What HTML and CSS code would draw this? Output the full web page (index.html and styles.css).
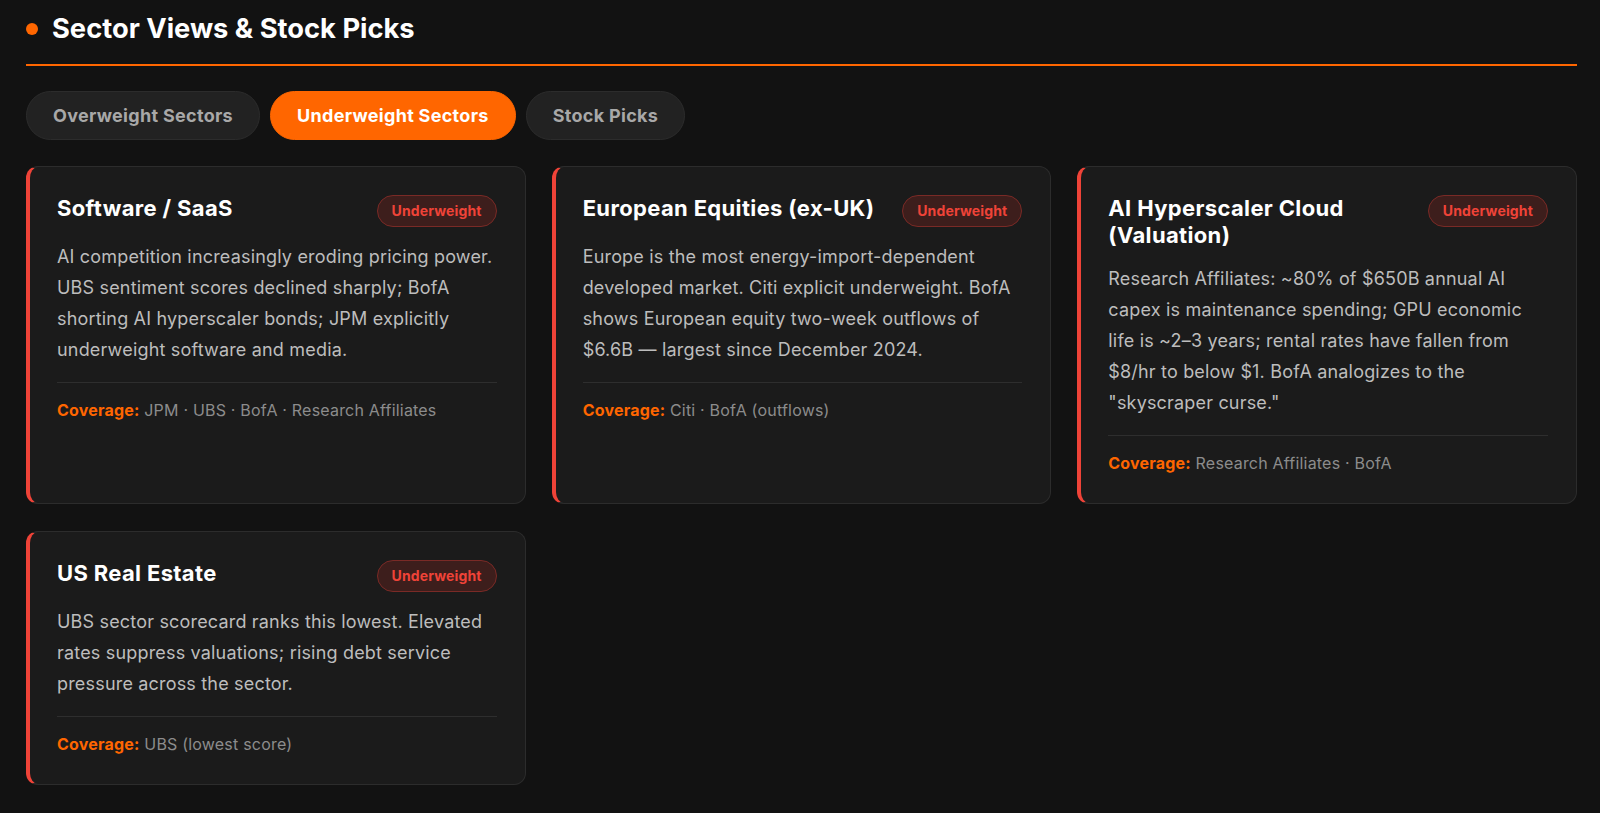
FILE: index.html
```html
<!DOCTYPE html>
<html lang="en">
<head>
    <meta charset="UTF-8">
    <meta name="viewport" content="width=device-width, initial-scale=1.0">
    <title>Sector Views &amp; Stock Picks</title>
    <link rel="stylesheet" href="styles.css">
</head>
<body>
    <div class="section">
        <h2 class="section-title"><span class="dot"></span>Sector Views &amp; Stock Picks</h2>

        <div class="tabs">
            <button class="tab">Overweight Sectors</button>
            <button class="tab active">Underweight Sectors</button>
            <button class="tab">Stock Picks</button>
        </div>

        <div class="cards">
            <div class="card">
                <div class="card-head">
                    <h3>Software / SaaS</h3>
                    <span class="badge">Underweight</span>
                </div>
                <p class="desc">AI competition increasingly eroding pricing power. UBS sentiment scores declined sharply; BofA shorting AI hyperscaler bonds; JPM explicitly underweight software and media.</p>
                <div class="coverage"><strong>Coverage:</strong> JPM · UBS · BofA · Research Affiliates</div>
            </div>

            <div class="card">
                <div class="card-head">
                    <h3>European Equities (ex-UK)</h3>
                    <span class="badge">Underweight</span>
                </div>
                <p class="desc">Europe is the most energy-import-dependent developed market. Citi explicit underweight. BofA shows European equity two-week outflows of $6.6B — largest since December 2024.</p>
                <div class="coverage"><strong>Coverage:</strong> Citi · BofA (outflows)</div>
            </div>

            <div class="card">
                <div class="card-head">
                    <h3>AI Hyperscaler Cloud (Valuation)</h3>
                    <span class="badge">Underweight</span>
                </div>
                <p class="desc">Research Affiliates: ~80% of $650B annual AI capex is maintenance spending; GPU economic life is ~2–3 years; rental rates have fallen from $8/hr to below $1. BofA analogizes to the "skyscraper curse."</p>
                <div class="coverage"><strong>Coverage:</strong> Research Affiliates · BofA</div>
            </div>

            <div class="card">
                <div class="card-head">
                    <h3>US Real Estate</h3>
                    <span class="badge">Underweight</span>
                </div>
                <p class="desc">UBS sector scorecard ranks this lowest. Elevated rates suppress valuations; rising debt service pressure across the sector.</p>
                <div class="coverage"><strong>Coverage:</strong> UBS (lowest score)</div>
            </div>
        </div>
    </div>
</body>
</html>
```

FILE: styles.css
```css
body { margin: 0; background: #121212; color: #fff; font-family: Inter, "Open Sans", sans-serif; }
.section { padding: 12px 23px 40px 26px; }
.section-title { display: flex; align-items: center; gap: 14px; margin: 0; padding-bottom: 18px; border-bottom: 2px solid #ff6600; font-size: 27.3px; line-height: 34px; font-weight: 700; }
.dot { width: 12px; height: 12px; border-radius: 50%; background: #ff6600; }
.tabs { display: flex; gap: 10px; margin: 25px 0 26px; }
.tab { font-family: inherit; font-size: 18px; font-weight: 700; letter-spacing: 0.3px; color: #a8a8a8; background: #222; border: 1px solid #2c2c2c; border-radius: 25px; padding: 13px 26px; line-height: 21px; cursor: pointer; }
.tab.active { background: #ff6600; border-color: #ff6600; color: #fff; }
.cards { display: grid; grid-template-columns: repeat(3, 1fr); gap: 27px 26px; }
.card { background: #1b1b1b; border: 1px solid #2c2c2c; border-left: 4px solid #ef4338; border-radius: 12px; padding: 28px 28px 29px 27px; }
.card-head { display: flex; justify-content: space-between; align-items: flex-start; gap: 20px; margin-bottom: 14px; }
.card-head h3 { margin: 0; font-size: 22px; line-height: 27px; font-weight: 700; letter-spacing: 0.35px; color: #fff; }
.badge { flex-shrink: 0; font-size: 14px; font-weight: 700; letter-spacing: 0.15px; color: #ef4338; background: #3d1e1c; border: 1px solid #7a2a26; border-radius: 16px; padding: 6px 14px; line-height: 18px; }
.desc { margin: 0 0 16px; font-size: 18px; line-height: 31px; letter-spacing: 0.18px; color: #bdbdbd; padding-bottom: 17px; border-bottom: 1px solid #2e2e2e; }
.coverage { font-size: 16px; line-height: 22px; letter-spacing: 0.2px; color: #8c8c8c; }
.coverage strong { color: #ff6600; }
```
